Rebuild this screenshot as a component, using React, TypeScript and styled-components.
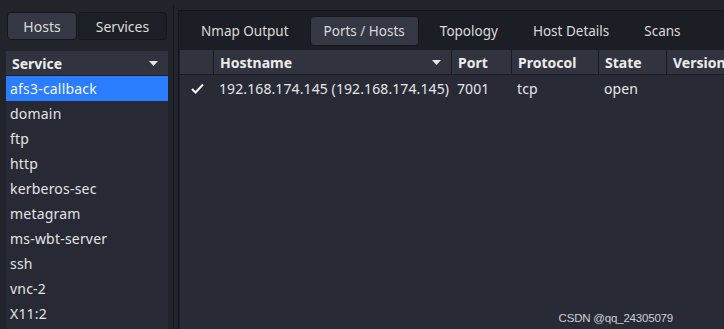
import styled, { createGlobalStyle } from "styled-components";

const GlobalStyle = createGlobalStyle`
  html, body {
    margin: 0;
    padding: 0;
    background: #22242c;
  }
  body {
    font-family: "Noto Sans", "Open Sans", sans-serif;
  }
`;

const services = [
  "afs3-callback",
  "domain",
  "ftp",
  "http",
  "kerberos-sec",
  "metagram",
  "ms-wbt-server",
  "ssh",
  "vnc-2",
  "X11:2",
];

const tabs = ["Nmap Output", "Ports / Hosts", "Topology", "Host Details", "Scans"];

const columns = [
  { name: "", width: 34, sort: false },
  { name: "Hostname", width: 238, sort: true },
  { name: "Port", width: 60, sort: false },
  { name: "Protocol", width: 87, sort: false },
  { name: "State", width: 68, sort: false },
  { name: "Version", width: 80, sort: false },
];

const SortArrow = () => (
  <svg width="9" height="5" viewBox="0 0 9 5">
    <path d="M0 0 L9 0 L4.5 5 Z" fill="#e8e8e8" />
  </svg>
);

const Check = () => (
  <svg width="13" height="11" viewBox="0 0 13 11">
    <path d="M1 6 L4.5 9.5 L12 1.5" stroke="#f2f2f2" strokeWidth="2" fill="none" />
  </svg>
);

export default function App() {
  return (
    <>
      <GlobalStyle />
      <Window>
        <LeftPane>
          <SwitchBar>
            <SwitchTab active w={70}>Hosts</SwitchTab>
            <SwitchTab w={89}>Services</SwitchTab>
          </SwitchBar>
          <ServiceList>
            <ListHeader>
              <span>Service</span>
              <SortArrow />
            </ListHeader>
            {services.map((s, i) => (
              <ListRow key={s} selected={i === 0}>
                {s}
              </ListRow>
            ))}
          </ServiceList>
        </LeftPane>
        <Splitter>
          <SplitLine />
        </Splitter>
        <RightPane>
          <TabBar>
            {tabs.map((t) => (
              <Tab key={t} active={t === "Ports / Hosts"}>
                {t}
              </Tab>
            ))}
          </TabBar>
          <Table>
            <HeaderRow>
              {columns.map((c, i) => (
                <HeaderCell key={i} w={c.width}>
                  <span>{c.name}</span>
                  {c.sort && <SortArrow />}
                </HeaderCell>
              ))}
            </HeaderRow>
            <DataRow>
              <DataCell w={34} center>
                <Check />
              </DataCell>
              <DataCell w={238}>192.168.174.145 (192.168.174.145)</DataCell>
              <DataCell w={60}>7001</DataCell>
              <DataCell w={87}>tcp</DataCell>
              <DataCell w={68}>open</DataCell>
              <DataCell w={80}></DataCell>
            </DataRow>
            <Watermark>CSDN @qq_24305079</Watermark>
          </Table>
        </RightPane>
      </Window>
    </>
  );
}

const Window = styled.div`
  width: 724px;
  height: 329px;
  display: flex;
  overflow: hidden;
  background: #22242c;
  color: #e4e4e4;
  font-size: 14px;
`;

const LeftPane = styled.div`
  width: 162px;
  padding-left: 6px;
  display: flex;
  flex-direction: column;
  flex-shrink: 0;
`;

const SwitchBar = styled.div`
  display: flex;
  gap: 1px;
  padding: 12px 0 0 1px;
  height: 28px;
  margin-bottom: 11px;
`;

const SwitchTab = styled.div<{ active?: boolean; w: number }>`
  width: ${({ w }) => w}px;
  height: 28px;
  box-sizing: border-box;
  display: flex;
  align-items: center;
  justify-content: center;
  border-radius: 4px;
  border: 1px solid #16171c;
  background: ${({ active }) => (active ? "#343744" : "#1d1f26")};
  color: #dcdcdc;
  font-size: 14px;
`;

const ServiceList = styled.div`
  flex: 1;
  background: #272a35;
  display: flex;
  flex-direction: column;
`;

const ListHeader = styled.div`
  height: 24px;
  display: flex;
  align-items: center;
  justify-content: space-between;
  padding: 0 10px 0 6px;
  background: #31343f;
  font-weight: 700;
  color: #ececec;
  border-bottom: 1px solid #1a1b21;
`;

const ListRow = styled.div<{ selected?: boolean }>`
  height: 25px;
  display: flex;
  align-items: center;
  padding-left: 4px;
  letter-spacing: 0.2px;
  background: ${({ selected }) => (selected ? "#2a7dff" : "transparent")};
  color: ${({ selected }) => (selected ? "#f4f6fa" : "#e4e4e4")};
`;

const Splitter = styled.div`
  width: 10px;
  flex-shrink: 0;
  display: flex;
  justify-content: center;
  padding-top: 5px;
`;

const SplitLine = styled.div`
  width: 1px;
  background: #15161b;
`;

const RightPane = styled.div`
  flex: 1;
  margin-top: 10px;
  display: flex;
  flex-direction: column;
  border-left: 1px solid #15161b;
  border-top: 1px solid #15161b;
  background: #1c1e25;
  min-width: 0;
`;

const TabBar = styled.div`
  height: 39px;
  display: flex;
  align-items: center;
  gap: 7px;
  padding-left: 8px;
`;

const Tab = styled.div<{ active?: boolean }>`
  height: 30px;
  padding: 0 13px;
  display: flex;
  align-items: center;
  border-radius: 4px;
  box-sizing: border-box;
  border: 1px solid ${({ active }) => (active ? "#16171c" : "transparent")};
  background: ${({ active }) => (active ? "#343744" : "transparent")};
  color: #dadada;
  font-size: 13.5px;
  white-space: nowrap;
`;

const Table = styled.div`
  flex: 1;
  position: relative;
  background: #282b36;
  margin-left: 1px;
`;

const HeaderRow = styled.div`
  display: flex;
  height: 24px;
  background: #31343f;
  border-bottom: 1px solid #1a1b21;
`;

const HeaderCell = styled.div<{ w: number }>`
  width: ${({ w }) => w}px;
  flex-shrink: 0;
  box-sizing: border-box;
  display: flex;
  align-items: center;
  justify-content: space-between;
  padding: 0 10px 0 6px;
  border-right: 1px solid #1a1b21;
  font-weight: 700;
  color: #ececec;
  white-space: nowrap;
  overflow: hidden;
`;

const DataRow = styled.div`
  display: flex;
  height: 27px;
  align-items: center;
`;

const DataCell = styled.div<{ w: number; center?: boolean }>`
  width: ${({ w }) => w}px;
  flex-shrink: 0;
  box-sizing: border-box;
  display: flex;
  align-items: center;
  justify-content: ${({ center }) => (center ? "center" : "flex-start")};
  padding-left: ${({ center }) => (center ? "0" : "5px")};
  white-space: nowrap;
  letter-spacing: 0.1px;
  color: #e6e6e6;
`;

const Watermark = styled.div`
  position: absolute;
  right: 51px;
  bottom: 5px;
  font-family: "Liberation Sans", sans-serif;
  font-size: 11.5px;
  color: #cfd0d4;
  letter-spacing: -0.2px;
`;
